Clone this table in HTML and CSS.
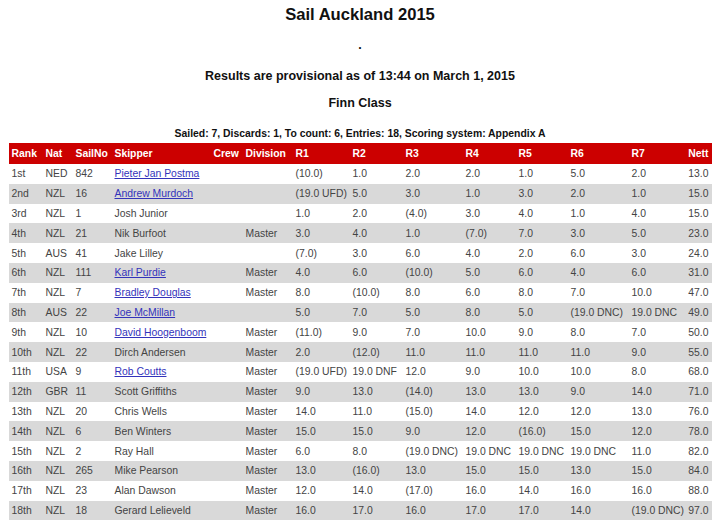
FILE: index.html
```html
<!DOCTYPE html>
<html>
<head>
<meta charset="utf-8">
<title>Sail Auckland 2015</title>
<link rel="stylesheet" href="styles.css">
</head>
<body>
<div class="page">
  <h1 class="title">Sail Auckland 2015</h1>
  <p class="sub dot">.</p>
  <p class="sub results">Results are provisional as of 13:44 on March 1, 2015</p>
  <p class="sub cls">Finn Class</p>
  <p class="summary">Sailed: 7, Discards: 1, To count: 6, Entries: 18, Scoring system: Appendix A</p>
  <table class="results-table">
    <colgroup>
      <col class="c-rank"><col class="c-nat"><col class="c-sail"><col class="c-skip"><col class="c-crew"><col class="c-div">
      <col class="c-r1"><col class="c-r2"><col class="c-r3"><col class="c-r4"><col class="c-r5"><col class="c-r6"><col class="c-r7"><col class="c-nett">
    </colgroup>
    <thead>
      <tr><th>Rank</th><th>Nat</th><th>SailNo</th><th>Skipper</th><th>Crew</th><th>Division</th><th>R1</th><th>R2</th><th>R3</th><th>R4</th><th>R5</th><th>R6</th><th>R7</th><th class="nett">Nett</th></tr>
    </thead>
    <tbody>
      <tr><td>1st</td><td>NED</td><td>842</td><td><a href="#">Pieter Jan Postma</a></td><td></td><td></td><td>(10.0)</td><td>1.0</td><td>2.0</td><td>2.0</td><td>1.0</td><td>5.0</td><td>2.0</td><td class="nett">13.0</td></tr>
      <tr><td>2nd</td><td>NZL</td><td>16</td><td><a href="#">Andrew Murdoch</a></td><td></td><td></td><td>(19.0 UFD)</td><td>5.0</td><td>3.0</td><td>1.0</td><td>3.0</td><td>2.0</td><td>1.0</td><td class="nett">15.0</td></tr>
      <tr><td>3rd</td><td>NZL</td><td>1</td><td>Josh Junior</td><td></td><td></td><td>1.0</td><td>2.0</td><td>(4.0)</td><td>3.0</td><td>4.0</td><td>1.0</td><td>4.0</td><td class="nett">15.0</td></tr>
      <tr><td>4th</td><td>NZL</td><td>21</td><td>Nik Burfoot</td><td></td><td>Master</td><td>3.0</td><td>4.0</td><td>1.0</td><td>(7.0)</td><td>7.0</td><td>3.0</td><td>5.0</td><td class="nett">23.0</td></tr>
      <tr><td>5th</td><td>AUS</td><td>41</td><td>Jake Lilley</td><td></td><td></td><td>(7.0)</td><td>3.0</td><td>6.0</td><td>4.0</td><td>2.0</td><td>6.0</td><td>3.0</td><td class="nett">24.0</td></tr>
      <tr><td>6th</td><td>NZL</td><td>111</td><td><a href="#">Karl Purdie</a></td><td></td><td>Master</td><td>4.0</td><td>6.0</td><td>(10.0)</td><td>5.0</td><td>6.0</td><td>4.0</td><td>6.0</td><td class="nett">31.0</td></tr>
      <tr><td>7th</td><td>NZL</td><td>7</td><td><a href="#">Bradley Douglas</a></td><td></td><td>Master</td><td>8.0</td><td>(10.0)</td><td>8.0</td><td>6.0</td><td>8.0</td><td>7.0</td><td>10.0</td><td class="nett">47.0</td></tr>
      <tr><td>8th</td><td>AUS</td><td>22</td><td><a href="#">Joe McMillan</a></td><td></td><td></td><td>5.0</td><td>7.0</td><td>5.0</td><td>8.0</td><td>5.0</td><td>(19.0 DNC)</td><td>19.0 DNC</td><td class="nett">49.0</td></tr>
      <tr><td>9th</td><td>NZL</td><td>10</td><td><a href="#">David Hoogenboom</a></td><td></td><td>Master</td><td>(11.0)</td><td>9.0</td><td>7.0</td><td>10.0</td><td>9.0</td><td>8.0</td><td>7.0</td><td class="nett">50.0</td></tr>
      <tr><td>10th</td><td>NZL</td><td>22</td><td>Dirch Andersen</td><td></td><td>Master</td><td>2.0</td><td>(12.0)</td><td>11.0</td><td>11.0</td><td>11.0</td><td>11.0</td><td>9.0</td><td class="nett">55.0</td></tr>
      <tr><td>11th</td><td>USA</td><td>9</td><td><a href="#">Rob Coutts</a></td><td></td><td>Master</td><td>(19.0 UFD)</td><td>19.0 DNF</td><td>12.0</td><td>9.0</td><td>10.0</td><td>10.0</td><td>8.0</td><td class="nett">68.0</td></tr>
      <tr><td>12th</td><td>GBR</td><td>11</td><td>Scott Griffiths</td><td></td><td>Master</td><td>9.0</td><td>13.0</td><td>(14.0)</td><td>13.0</td><td>13.0</td><td>9.0</td><td>14.0</td><td class="nett">71.0</td></tr>
      <tr><td>13th</td><td>NZL</td><td>20</td><td>Chris Wells</td><td></td><td>Master</td><td>14.0</td><td>11.0</td><td>(15.0)</td><td>14.0</td><td>12.0</td><td>12.0</td><td>13.0</td><td class="nett">76.0</td></tr>
      <tr><td>14th</td><td>NZL</td><td>6</td><td>Ben Winters</td><td></td><td>Master</td><td>15.0</td><td>15.0</td><td>9.0</td><td>12.0</td><td>(16.0)</td><td>15.0</td><td>12.0</td><td class="nett">78.0</td></tr>
      <tr><td>15th</td><td>NZL</td><td>2</td><td>Ray Hall</td><td></td><td>Master</td><td>6.0</td><td>8.0</td><td>(19.0 DNC)</td><td>19.0 DNC</td><td>19.0 DNC</td><td>19.0 DNC</td><td>11.0</td><td class="nett">82.0</td></tr>
      <tr><td>16th</td><td>NZL</td><td>265</td><td>Mike Pearson</td><td></td><td>Master</td><td>13.0</td><td>(16.0)</td><td>13.0</td><td>15.0</td><td>15.0</td><td>13.0</td><td>15.0</td><td class="nett">84.0</td></tr>
      <tr><td>17th</td><td>NZL</td><td>23</td><td>Alan Dawson</td><td></td><td>Master</td><td>12.0</td><td>14.0</td><td>(17.0)</td><td>16.0</td><td>14.0</td><td>16.0</td><td>16.0</td><td class="nett">88.0</td></tr>
      <tr><td>18th</td><td>NZL</td><td>18</td><td>Gerard Lelieveld</td><td></td><td>Master</td><td>16.0</td><td>17.0</td><td>16.0</td><td>17.0</td><td>17.0</td><td>14.0</td><td>(19.0 DNC)</td><td class="nett">97.0</td></tr>
    </tbody>
  </table>
</div>
</body>
</html>
```
FILE: styles.css
```css
html, body {
  margin: 0;
  padding: 0;
  background: #ffffff;
}
body {
  font-family: "Liberation Sans", Arial, sans-serif;
  color: #333333;
}
.page {
  display: flex;
  flex-direction: column;
  align-items: center;
}
.title {
  margin: 5px 0 0 0;
  height: 20px;
  line-height: 20px;
  font-size: 16.6px;
  font-weight: bold;
  color: #111111;
}
.sub {
  margin: 0;
  height: 16px;
  line-height: 16px;
  font-size: 12.5px;
  font-weight: bold;
  color: #111111;
}
.dot { margin-top: 12px; }
.results { margin-top: 15px; }
.cls { margin-top: 11px; }
.summary {
  margin: 16px 0 0 0;
  height: 13px;
  line-height: 13px;
  font-size: 10.4px;
  font-weight: bold;
  color: #111111;
}
.results-table {
  margin-top: 3px;
  width: 703px;
  table-layout: fixed;
  border-collapse: collapse;
  font-size: 10.4px;
}
.c-rank { width: 34px; }
.c-nat { width: 30px; }
.c-sail { width: 39px; }
.c-skip { width: 99px; }
.c-crew { width: 32px; }
.c-div { width: 50px; }
.c-r1 { width: 57px; }
.c-r2 { width: 53px; }
.c-r3 { width: 60px; }
.c-r4 { width: 53px; }
.c-r5 { width: 52px; }
.c-r6 { width: 61px; }
.c-r7 { width: 54px; }
.c-nett { width: 29px; }
.results-table th {
  background: #cc0000;
  color: #ffffff;
  font-weight: bold;
  text-align: left;
  height: 21px;
  padding: 0 0 0 3px;
  white-space: nowrap;
}
.results-table td {
  height: 19.8px;
  padding: 0 0 0 3px;
  text-align: left;
  white-space: nowrap;
  color: #444444;
}
.results-table .nett {
  text-align: right;
  padding: 0 3px 0 0;
}
.results-table tbody tr:nth-child(even) td {
  background: #d9d9d9;
}
.results-table a {
  color: #3333bb;
  text-decoration: underline;
}
```
